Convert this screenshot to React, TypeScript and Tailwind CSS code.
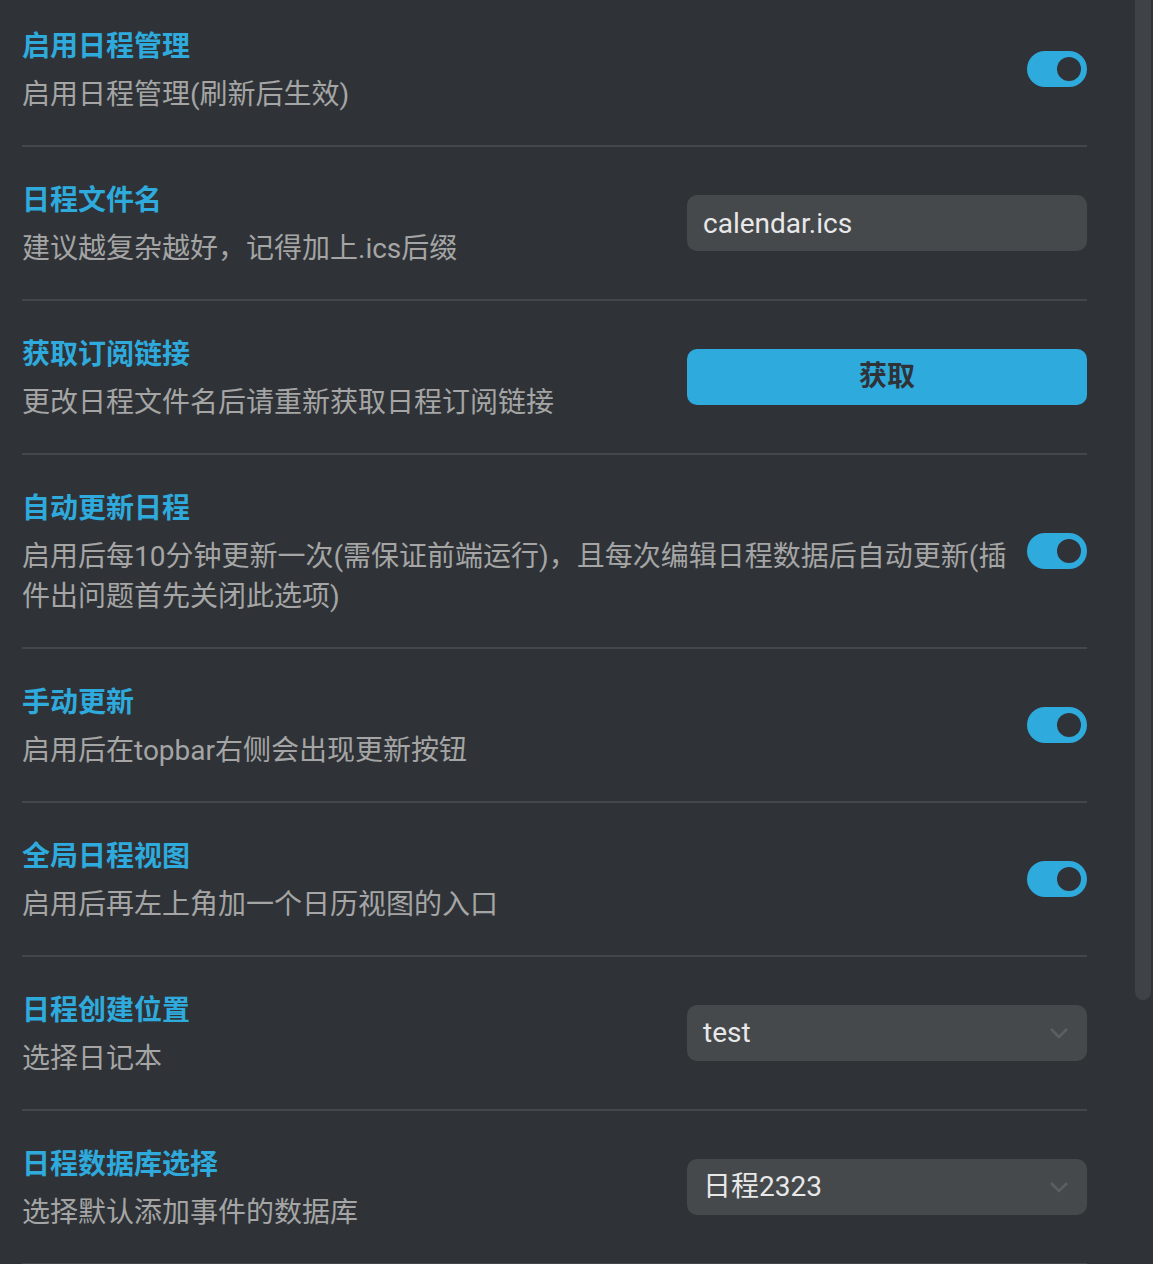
import React, { useState } from "react";

interface SettingRow {
  id: string;
  title: string;
  desc: string;
  control: "toggle" | "input" | "button" | "select";
  value?: string;
}

const rows: SettingRow[] = [
  { id: "enable", title: "启用日程管理", desc: "启用日程管理(刷新后生效)", control: "toggle" },
  { id: "file", title: "日程文件名", desc: "建议越复杂越好，记得加上.ics后缀", control: "input", value: "calendar.ics" },
  { id: "link", title: "获取订阅链接", desc: "更改日程文件名后请重新获取日程订阅链接", control: "button", value: "获取" },
  {
    id: "auto",
    title: "自动更新日程",
    desc: "启用后每10分钟更新一次(需保证前端运行)，且每次编辑日程数据后自动更新(插件出问题首先关闭此选项)",
    control: "toggle",
  },
  { id: "manual", title: "手动更新", desc: "启用后在topbar右侧会出现更新按钮", control: "toggle" },
  { id: "global", title: "全局日程视图", desc: "启用后再左上角加一个日历视图的入口", control: "toggle" },
  { id: "notebook", title: "日程创建位置", desc: "选择日记本", control: "select", value: "test" },
  { id: "db", title: "日程数据库选择", desc: "选择默认添加事件的数据库", control: "select", value: "日程2323" },
];

const Toggle = ({ on, onChange }: { on: boolean; onChange: () => void }) => (
  <button
    onClick={onChange}
    className={`mb-1 flex h-[36px] w-[60px] shrink-0 items-center rounded-full px-[6px] ${
      on ? "justify-end bg-[#2eaadd]" : "justify-start bg-[#45494c]"
    }`}
  >
    <span className="h-[24px] w-[24px] rounded-full bg-[#2f3337]" />
  </button>
);

export default function App() {
  const [toggles, setToggles] = useState<Record<string, boolean>>({
    enable: true,
    auto: true,
    manual: true,
    global: true,
  });

  const renderControl = (row: SettingRow) => {
    if (row.control === "toggle") {
      return (
        <Toggle
          on={!!toggles[row.id]}
          onChange={() => setToggles({ ...toggles, [row.id]: !toggles[row.id] })}
        />
      );
    }
    if (row.control === "input") {
      return (
        <input
          defaultValue={row.value}
          className="mb-1 h-[56px] w-[400px] shrink-0 rounded-[10px] bg-[#45494c] px-4 text-[28px] text-[#e8e8e8] outline-none"
        />
      );
    }
    if (row.control === "button") {
      return (
        <button className="mb-1 h-[56px] w-[400px] shrink-0 rounded-[10px] bg-[#2eaadd] text-[28px] font-bold text-[#2f3337]">
          {row.value}
        </button>
      );
    }
    return (
      <div className="mb-1 flex h-[56px] w-[400px] shrink-0 items-center justify-between rounded-[10px] bg-[#45494c] pl-4 pr-[18px]">
        <span className="text-[28px] text-[#e8e8e8]">{row.value}</span>
        <svg width="20" height="12" viewBox="0 0 20 12" fill="none">
          <path d="M2 2l8 8 8-8" stroke="#5b5f63" strokeWidth="2.5" />
        </svg>
      </div>
    );
  };

  return (
    <div
      className="relative h-[1264px] w-full overflow-hidden bg-[#2f3337]"
      style={{ fontFamily: 'Roboto, "Noto Sans CJK SC", sans-serif' }}
    >
      <div className="mt-[-7px] pl-[22px] pr-[66px]">
        {rows.map((row) => (
          <div key={row.id} className="flex items-center gap-5 border-b-2 border-[#43474b] pt-[34px] pb-[30px]">
            <div className="min-w-0 flex-1">
              <div className="text-[28px] font-bold leading-[40px] text-[#2eaadd]">{row.title}</div>
              <div className="mt-2 text-[28px] leading-[40px] text-[#a5a5a5]">{row.desc}</div>
            </div>
            {renderControl(row)}
          </div>
        ))}
      </div>
      <div className="absolute right-[2px] top-0 h-[1000px] w-[16px] rounded-b-full bg-[#3f4347]" />
    </div>
  );
}
